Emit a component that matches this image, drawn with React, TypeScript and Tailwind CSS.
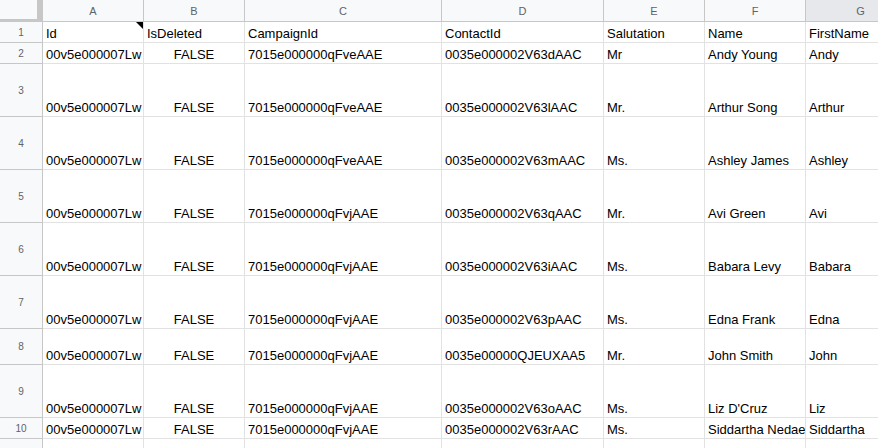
import React from 'react';

// Column widths include each cell's 1px right gridline
const columns = [
  { letter: 'A', width: 101 },
  { letter: 'B', width: 101 },
  { letter: 'C', width: 197 },
  { letter: 'D', width: 162 },
  { letter: 'E', width: 101 },
  { letter: 'F', width: 101 },
  { letter: 'G', width: 110 },
];

type Row = { n: number; h: string; cells: string[] };

const rows: Row[] = [
  { n: 1, h: 'h-[21px]', cells: ['Id', 'IsDeleted', 'CampaignId', 'ContactId', 'Salutation', 'Name', 'FirstName'] },
  { n: 2, h: 'h-[21px]', cells: ['00v5e000007Lw', 'FALSE', '7015e000000qFveAAE', '0035e000002V63dAAC', 'Mr', 'Andy Young', 'Andy'] },
  { n: 3, h: 'h-[53px]', cells: ['00v5e000007Lw', 'FALSE', '7015e000000qFveAAE', '0035e000002V63lAAC', 'Mr.', 'Arthur Song', 'Arthur'] },
  { n: 4, h: 'h-[53px]', cells: ['00v5e000007Lw', 'FALSE', '7015e000000qFveAAE', '0035e000002V63mAAC', 'Ms.', 'Ashley James', 'Ashley'] },
  { n: 5, h: 'h-[53px]', cells: ['00v5e000007Lw', 'FALSE', '7015e000000qFvjAAE', '0035e000002V63qAAC', 'Mr.', 'Avi Green', 'Avi'] },
  { n: 6, h: 'h-[53px]', cells: ['00v5e000007Lw', 'FALSE', '7015e000000qFvjAAE', '0035e000002V63iAAC', 'Ms.', 'Babara Levy', 'Babara'] },
  { n: 7, h: 'h-[53px]', cells: ['00v5e000007Lw', 'FALSE', '7015e000000qFvjAAE', '0035e000002V63pAAC', 'Ms.', 'Edna Frank', 'Edna'] },
  { n: 8, h: 'h-[36px]', cells: ['00v5e000007Lw', 'FALSE', '7015e000000qFvjAAE', '0035e00000QJEUXAA5', 'Mr.', 'John Smith', 'John'] },
  { n: 9, h: 'h-[53px]', cells: ['00v5e000007Lw', 'FALSE', '7015e000000qFvjAAE', '0035e000002V63oAAC', 'Ms.', "Liz D'Cruz", 'Liz'] },
  { n: 10, h: 'h-[21px]', cells: ['00v5e000007Lw', 'FALSE', '7015e000000qFvjAAE', '0035e000002V63rAAC', 'Ms.', 'Siddartha Nedaee', 'Siddartha'] },
  { n: 11, h: 'h-[21px]', cells: ['', '', '', '', '', '', ''] },
];

const App: React.FC = () => {
  return (
    <div className="w-[878px] h-[448px] overflow-hidden bg-white font-['Liberation_Sans',Arial,sans-serif] text-[13px] text-[#000]">
      <div className="flex w-max">
        {/* corner with freeze bars */}
        <div className="w-[43px] h-[22px] shrink-0 bg-[#f8f9fa] border-r-[6px] border-b-[3px] border-[#c7c7c7]" />
        {columns.map((c) => (
          <div
            key={c.letter}
            style={{ width: c.width }}
            className={`h-[22px] shrink-0 flex items-center justify-center pt-[1px] border-r border-b border-[#c7c7c7] text-[11px] text-[#5f6368] ${
              c.letter === 'G' ? 'bg-[#e6e8eb]' : 'bg-[#f8f9fa]'
            }`}
          >
            {c.letter}
          </div>
        ))}
      </div>

      {rows.map((r) => (
        <div key={r.n} className="flex w-max">
          <div className={`${r.h} w-[43px] shrink-0 flex items-center justify-center bg-[#f8f9fa] border-r border-b border-[#c7c7c7] text-[10px] text-[#5f6368]`}>
            {r.n < 11 ? r.n : ''}
          </div>
          {r.cells.map((v, i) => (
            <div
              key={i}
              style={{ width: columns[i].width }}
              className={`${r.h} shrink-0 relative flex items-end overflow-hidden whitespace-nowrap border-r border-b border-[#e2e2e2] px-[3px] leading-[16px] ${
                i === 1 && r.n > 1 ? 'justify-center' : ''
              }`}
            >
              {v}
              {r.n === 1 && i === 0 && (
                <span className="absolute top-0 right-0 w-0 h-0 border-l-[7px] border-l-transparent border-t-[7px] border-t-black" />
              )}
            </div>
          ))}
        </div>
      ))}
    </div>
  );
};

export default App;
